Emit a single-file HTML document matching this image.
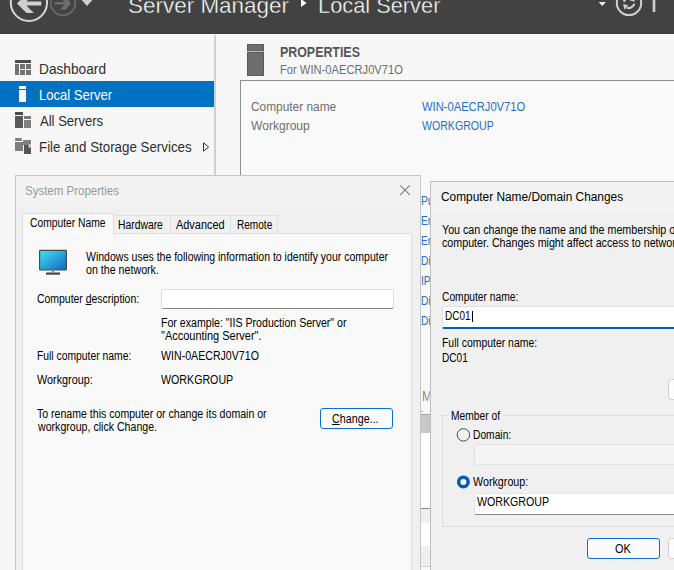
<!DOCTYPE html>
<html><head><meta charset="utf-8">
<style>
html,body{margin:0;padding:0;width:674px;height:570px;overflow:hidden;background:#f7f7f7;position:relative}
.t{position:absolute;white-space:nowrap;line-height:0;font-family:"Liberation Sans",sans-serif;transform-origin:0 0}
.a{position:absolute;box-sizing:border-box}
svg{position:absolute;left:0;top:0}
u{text-decoration:underline;text-underline-offset:1px}
</style></head><body>
<!-- ===== Server Manager chrome ===== -->
<div class="a" style="left:0;top:0;width:674px;height:33px;background:#424242"></div>
<div class="a" style="left:0;top:33px;width:674px;height:1px;background:#393939"></div>
<div class="a" style="left:0;top:34px;width:674px;height:1px;background:#fbfbfb"></div>
<svg width="674" height="34" viewBox="0 0 674 34">
  <circle cx="28.9" cy="2.8" r="18.1" fill="none" stroke="#d6d6d6" stroke-width="2"/>
  <polygon points="16.9,3.5 26.5,13 33.9,13 26.4,5.6 41.3,5.6 41.3,1.4 26.4,1.4 33.9,-6 26.5,-6" fill="#cfcfcf"/>
  <circle cx="63" cy="2.9" r="12.3" fill="none" stroke="#6c6c6c" stroke-width="1.6"/>
  <polygon points="71,3.3 65.8,9.8 60,9.8 64.6,4.6 54.4,4.6 54.4,2 64.6,2 60,-3.2 65.8,-3.2" fill="#6c6c6c"/>
  <polygon points="81.7,0 92.3,0 87,6.1" fill="#d0d0d0"/>
  <polygon points="301,-1 306.6,3 301,7.1" fill="#ffffff"/>
  <polygon points="598.7,2.1 605.9,2.1 602.3,6" fill="#eeeeee"/>
  <circle cx="629" cy="2.9" r="12.2" fill="none" stroke="#d0d0d0" stroke-width="2"/>
  <path d="M626.8,7.6 Q631,9.6 634.6,3.8" fill="none" stroke="#cfcfcf" stroke-width="2.1"/>
  <polygon points="623.2,4 628.3,5.2 624.4,9.8" fill="#cfcfcf"/>
  <path d="M623.6,1.6 Q626.5,-3 631.2,-2.4" fill="none" stroke="#cfcfcf" stroke-width="2.1"/>
  <polygon points="634.8,1.8 629.7,0.6 633.6,-4" fill="#cfcfcf"/>
  <rect x="652.7" y="0" width="2.6" height="12" fill="#d0d0d0"/>
</svg>
<!-- nav -->
<div class="a" style="left:214px;top:35px;width:2px;height:535px;background:#d0d0d0"></div>
<div class="a" style="left:0;top:81px;width:214px;height:26px;background:#0072bf"></div>
<svg width="40" height="160" viewBox="0 0 40 160">
  <rect x="15" y="60" width="16" height="3" fill="#4c4c4c"/>
  <rect x="15" y="64" width="4" height="11" fill="#717171"/>
  <rect x="20" y="64" width="5" height="5" fill="#717171"/>
  <rect x="26" y="64" width="5" height="5" fill="#717171"/>
  <rect x="20" y="70" width="5" height="5" fill="#717171"/>
  <rect x="26" y="70" width="5" height="5" fill="#717171"/>
  <rect x="19" y="86" width="7" height="3" fill="#fff"/>
  <rect x="19" y="90" width="7" height="12" fill="#fff"/>
  <rect x="15" y="112" width="8" height="3" fill="#4d4d4d"/>
  <rect x="15" y="116" width="8" height="12" fill="#595959"/>
  <rect x="24" y="116" width="7" height="3" fill="#7a7a7a"/>
  <rect x="24" y="120" width="7" height="8" fill="#7f7f7f"/>
  <rect x="15" y="138" width="7" height="3" rx="1" fill="#7f7f7f"/>
  <rect x="15" y="142" width="16" height="9" fill="#7f7f7f"/>
  <rect x="23" y="140" width="8" height="2" fill="#7f7f7f"/>
  <rect x="23" y="145" width="1" height="10" fill="#f7f7f7"/>
  <rect x="23" y="151" width="9" height="4" fill="#f7f7f7"/>
  <polygon points="24,145 28.5,145 31,147.5 31,154 24,154" fill="#555"/>
  <polygon points="28.5,144.5 31.5,147.5 31.5,144.5" fill="#f7f7f7"/>
  <polygon points="28.5,145 31,147.5 28.5,147.5" fill="#e6e6e6"/>
</svg>
<svg width="220" height="160" viewBox="0 0 220 160">
  <polygon points="203.5,142.8 208.6,147 203.5,151.2" fill="none" stroke="#333" stroke-width="1"/>
</svg>
<!-- properties -->
<svg width="280" height="90" viewBox="0 0 280 90">
  <rect x="247" y="44" width="17" height="32" fill="#5c5c5c"/>
  <rect x="247.5" y="44.5" width="16" height="6.5" fill="#6e6e6e" stroke="#5a5a5a" stroke-width="1"/>
  <rect x="247" y="51" width="17" height="1.5" fill="#bdbdbd"/>
  <rect x="247.5" y="52.5" width="16" height="23" fill="#6e6e6e" stroke="#5a5a5a" stroke-width="1"/>
</svg>
<div class="a" style="left:240px;top:80px;width:440px;height:500px;border-left:1px solid #8e8e8e;border-top:1px solid #8e8e8e;background:#f9f9f9"></div>
<div class="t" style="left:128.28px;top:6.00px;font-size:22px;color:#ffffff;transform:scaleX(1.0210);-webkit-text-stroke:0.4px #424242;">Server Manager</div>
<div class="t" style="left:318.11px;top:6.00px;font-size:22px;color:#ffffff;transform:scaleX(0.9912);-webkit-text-stroke:0.4px #424242;">Local Server</div>
<div class="t" style="left:39.12px;top:69.00px;font-size:14px;color:#2e2e2e;transform:scaleX(0.9790);">Dashboard</div>
<div class="t" style="left:39.17px;top:95.00px;font-size:14px;color:#ffffff;transform:scaleX(0.9316);">Local Server</div>
<div class="t" style="left:39.50px;top:121.00px;font-size:14px;color:#2e2e2e;transform:scaleX(0.9323);">All Servers</div>
<div class="t" style="left:38.55px;top:147.00px;font-size:14px;color:#2e2e2e;transform:scaleX(0.9523);">File and Storage Services</div>
<div class="t" style="left:279.90px;top:52.00px;font-size:14px;color:#555555;font-weight:700;transform:scaleX(0.8854);">PROPERTIES</div>
<div class="t" style="left:279.90px;top:70.00px;font-size:12px;color:#6e6e6e;transform:scaleX(0.9309);">For WIN-0AECRJ0V71O</div>
<div class="t" style="left:251.20px;top:107.00px;font-size:12px;color:#6d6d6d;transform:scaleX(0.9900);">Computer name</div>
<div class="t" style="left:251.20px;top:126.00px;font-size:12px;color:#6d6d6d;transform:scaleX(1.0052);">Workgroup</div>
<div class="t" style="left:421.60px;top:107.00px;font-size:12px;color:#1f6fc4;transform:scaleX(0.9324);">WIN-0AECRJ0V71O</div>
<div class="t" style="left:421.60px;top:126.00px;font-size:12px;color:#1f6fc4;transform:scaleX(0.8816);">WORKGROUP</div>
<!-- background list fragments -->
<div class="t" style="left:421px;top:201.14px;font-size:12px;color:#1f6fc4;transform:scaleX(0.85)">Pu</div>
<div class="t" style="left:421px;top:220.84px;font-size:12px;color:#1f6fc4;transform:scaleX(0.85)">En</div>
<div class="t" style="left:421px;top:240.84px;font-size:12px;color:#1f6fc4;transform:scaleX(0.85)">En</div>
<div class="t" style="left:421px;top:261.14px;font-size:12px;color:#1f6fc4;transform:scaleX(0.85)">Di</div>
<div class="t" style="left:421px;top:280.84px;font-size:12px;color:#1f6fc4;transform:scaleX(0.85)">IP</div>
<div class="t" style="left:421px;top:301.34px;font-size:12px;color:#1f6fc4;transform:scaleX(0.85)">Di</div>
<div class="t" style="left:421px;top:321.14px;font-size:12px;color:#1f6fc4;transform:scaleX(0.85)">Di</div>

<div class="t" style="left:421.5px;top:396px;font-size:14px;color:#8a8a8a;transform:scaleX(0.86)">M</div>
<div class="a" style="left:421px;top:411px;width:2px;height:1px;background:#8a7a9a;opacity:.6"></div>
<div class="a" style="left:421px;top:414px;width:9px;height:1px;background:#707080;opacity:.6"></div>
<div class="a" style="left:420px;top:415px;width:10px;height:18px;background:#c8c8c8"></div>
<div class="a" style="left:420px;top:433px;width:10px;height:75px;background:#fdfdfd"></div>
<div class="a" style="left:420px;top:508px;width:10px;height:1px;background:#8e8e8e"></div>
<div class="a" style="left:420px;top:509px;width:10px;height:14px;background:#efefef"></div>
<div class="a" style="left:420px;top:523px;width:10px;height:23px;background:#ffffff"></div>
<div class="a" style="left:420px;top:546px;width:10px;height:20px;background:#efefef"></div>
<div class="a" style="left:420px;top:566px;width:10px;height:1px;background:#cfcfcf"></div>
<!-- ===== System Properties dialog ===== -->
<div class="a" style="left:15px;top:175px;width:406px;height:400px;border:1px solid #c6c6c6;background:#f0f0f0"></div>
<div class="a" style="left:16px;top:176px;width:404px;height:30px;background:#f3f3f3"></div>
<svg width="420" height="200" viewBox="0 0 420 200">
  <path d="M400.2,185.3 L409.8,194.9 M409.8,185.3 L400.2,194.9" stroke="#7a7a7a" stroke-width="1.05"/>
</svg>
<div class="a" style="left:113px;top:215px;width:58px;height:19px;border:1px solid #dedede;background:#f0f0f0"></div>
<div class="a" style="left:170px;top:215px;width:61px;height:19px;border:1px solid #dedede;background:#f0f0f0"></div>
<div class="a" style="left:230px;top:215px;width:48px;height:19px;border:1px solid #dedede;background:#f0f0f0"></div>
<div class="a" style="left:22px;top:233px;width:390px;height:400px;border:1px solid #dedede;background:#f9f9f9"></div>
<div class="a" style="left:22px;top:213px;width:92px;height:22px;border:1px solid #dedede;border-bottom:none;background:#f9f9f9"></div>
<svg width="80" height="280" viewBox="0 0 80 280">
  <defs><linearGradient id="scr" x1="0" y1="0" x2="1" y2="1">
    <stop offset="0" stop-color="#42e2f2"/><stop offset="1" stop-color="#1168c4"/></linearGradient></defs>
  <rect x="39.6" y="250.4" width="26.8" height="19.6" rx="0.8" fill="url(#scr)" stroke="#4a4a4a" stroke-width="1.2"/>
  <rect x="51.5" y="270.5" width="3" height="2" fill="#9a9a9a"/>
  <rect x="46" y="272.5" width="14" height="2.2" fill="#474747"/>
</svg>
<div class="a" style="left:161px;top:289px;width:233px;height:20px;border:1px solid #dcdcdc;border-bottom:1px solid #8a8a8a;background:#fff;border-radius:2px"></div>
<div class="a" style="left:320px;top:408px;width:73px;height:21px;border:1px solid #0a6fd0;background:#fbfbfb;border-radius:3px"></div>
<div class="t" style="left:25.10px;top:191.00px;font-size:12px;color:#999999;transform:scaleX(0.9578);">System Properties</div>
<div class="t" style="left:29.60px;top:223.00px;font-size:12px;color:#000;transform:scaleX(0.8567);">Computer Name</div>
<div class="t" style="left:118.30px;top:225.00px;font-size:12px;color:#000;transform:scaleX(0.8616);">Hardware</div>
<div class="t" style="left:176.00px;top:225.00px;font-size:12px;color:#000;transform:scaleX(0.9108);">Advanced</div>
<div class="t" style="left:237.30px;top:225.00px;font-size:12px;color:#000;transform:scaleX(0.8384);">Remote</div>
<div class="t" style="left:86.40px;top:257.00px;font-size:12px;color:#000;transform:scaleX(0.8758);">Windows uses the following information to identify your computer</div>
<div class="t" style="left:86.40px;top:270.00px;font-size:12px;color:#000;transform:scaleX(0.8885);">on the network.</div>
<div class="t" style="left:36.80px;top:299.00px;font-size:12px;color:#000;transform:scaleX(0.8697);">Computer <u>d</u>escription:</div>
<div class="t" style="left:161.10px;top:323.00px;font-size:12px;color:#000;transform:scaleX(0.8836);">For example: "IIS Production Server" or</div>
<div class="t" style="left:161.10px;top:336.00px;font-size:12px;color:#000;transform:scaleX(0.9145);">"Accounting Server".</div>
<div class="t" style="left:37.30px;top:356.00px;font-size:12px;color:#000;transform:scaleX(0.8620);">Full computer name:</div>
<div class="t" style="left:160.80px;top:356.00px;font-size:12px;color:#000;transform:scaleX(0.8844);">WIN-0AECRJ0V71O</div>
<div class="t" style="left:37.30px;top:380.00px;font-size:12px;color:#000;transform:scaleX(0.9012);">Workgroup:</div>
<div class="t" style="left:160.80px;top:380.00px;font-size:12px;color:#000;transform:scaleX(0.8877);">WORKGROUP</div>
<div class="t" style="left:37.40px;top:414.00px;font-size:12px;color:#000;transform:scaleX(0.8804);">To rename this computer or change its domain or</div>
<div class="t" style="left:38.28px;top:427.00px;font-size:12px;color:#000;transform:scaleX(0.8833);">workgroup, click Change.</div>
<div class="t" style="left:332.20px;top:419.00px;font-size:12px;color:#000;transform:scaleX(0.8955);"><u>C</u>hange...</div>
<!-- ===== Computer Name/Domain Changes dialog ===== -->
<div class="a" style="left:430px;top:181px;width:300px;height:400px;border:1px solid #c0c0c0;background:#f0f0f0"></div>
<div class="a" style="left:431px;top:182px;width:300px;height:30px;background:#f3f3f3"></div>
<div class="a" style="left:442px;top:306px;width:240px;height:23px;background:#fff;border:1px solid #e0e0e0;border-bottom:2px solid #005fb8;border-radius:2px"></div>
<div class="a" style="left:471.5px;top:311px;width:1px;height:11px;background:#000"></div>
<div class="a" style="left:668px;top:379px;width:30px;height:21px;border:1px solid #cfcfcf;background:#fbfbfb;border-radius:3px"></div>
<div class="a" style="left:442px;top:415px;width:260px;height:112px;border:1px solid #dcdcdc"></div>
<div class="a" style="left:449px;top:410px;width:54px;height:10px;background:#f0f0f0"></div>
<svg width="674" height="570" viewBox="0 0 674 570">
  <circle cx="463.4" cy="434.9" r="6.2" fill="#f2f2f2" stroke="#4a4a4a" stroke-width="1"/>
  <circle cx="463.4" cy="481.9" r="6.5" fill="#005fb8"/>
  <circle cx="463.4" cy="481.9" r="3" fill="#fff"/>
</svg>
<div class="a" style="left:474px;top:444px;width:220px;height:21px;border:1px solid #e2e2e2;background:#f5f5f5;border-radius:2px"></div>
<div class="a" style="left:474px;top:493px;width:220px;height:22px;border:1px solid #e4e4e4;border-bottom:1px solid #868686;background:#fff;border-radius:2px"></div>
<div class="a" style="left:587px;top:538px;width:73px;height:21px;border:1px solid #0a6fd0;background:#fbfbfb;border-radius:3px"></div>
<div class="a" style="left:668px;top:538px;width:30px;height:21px;border:1px solid #cfcfcf;background:#fbfbfb;border-radius:3px"></div>
<div class="t" style="left:440.50px;top:197.00px;font-size:12px;color:#000;transform:scaleX(0.9892);">Computer Name/Domain Changes</div>
<div class="t" style="left:442.40px;top:230.00px;font-size:12px;color:#000;transform:scaleX(0.8911);">You can change the name and the membership of this</div>
<div class="t" style="left:442.40px;top:243.00px;font-size:12px;color:#000;transform:scaleX(0.8904);">computer. Changes might affect access to network resources.</div>
<div class="t" style="left:442.00px;top:297.00px;font-size:12px;color:#000;transform:scaleX(0.8536);">Computer name:</div>
<div class="t" style="left:445.20px;top:316.00px;font-size:12px;color:#000;transform:scaleX(0.8321);">DC01</div>
<div class="t" style="left:442.00px;top:343.00px;font-size:12px;color:#000;transform:scaleX(0.8694);">Full computer name:</div>
<div class="t" style="left:442.00px;top:358.00px;font-size:12px;color:#000;transform:scaleX(0.8386);">DC01</div>
<div class="t" style="left:451.00px;top:416.00px;font-size:12px;color:#000;transform:scaleX(0.8549);">Member of</div>
<div class="t" style="left:473.30px;top:435.00px;font-size:12px;color:#000;transform:scaleX(0.8546);">Domain:</div>
<div class="t" style="left:473.30px;top:482.00px;font-size:12px;color:#000;transform:scaleX(0.8947);">Workgroup:</div>
<div class="t" style="left:476.50px;top:502.00px;font-size:12px;color:#000;transform:scaleX(0.8853);">WORKGROUP</div>
<div class="t" style="left:615.20px;top:549.00px;font-size:12px;color:#000;transform:scaleX(0.9115);">OK</div>
</body></html>
